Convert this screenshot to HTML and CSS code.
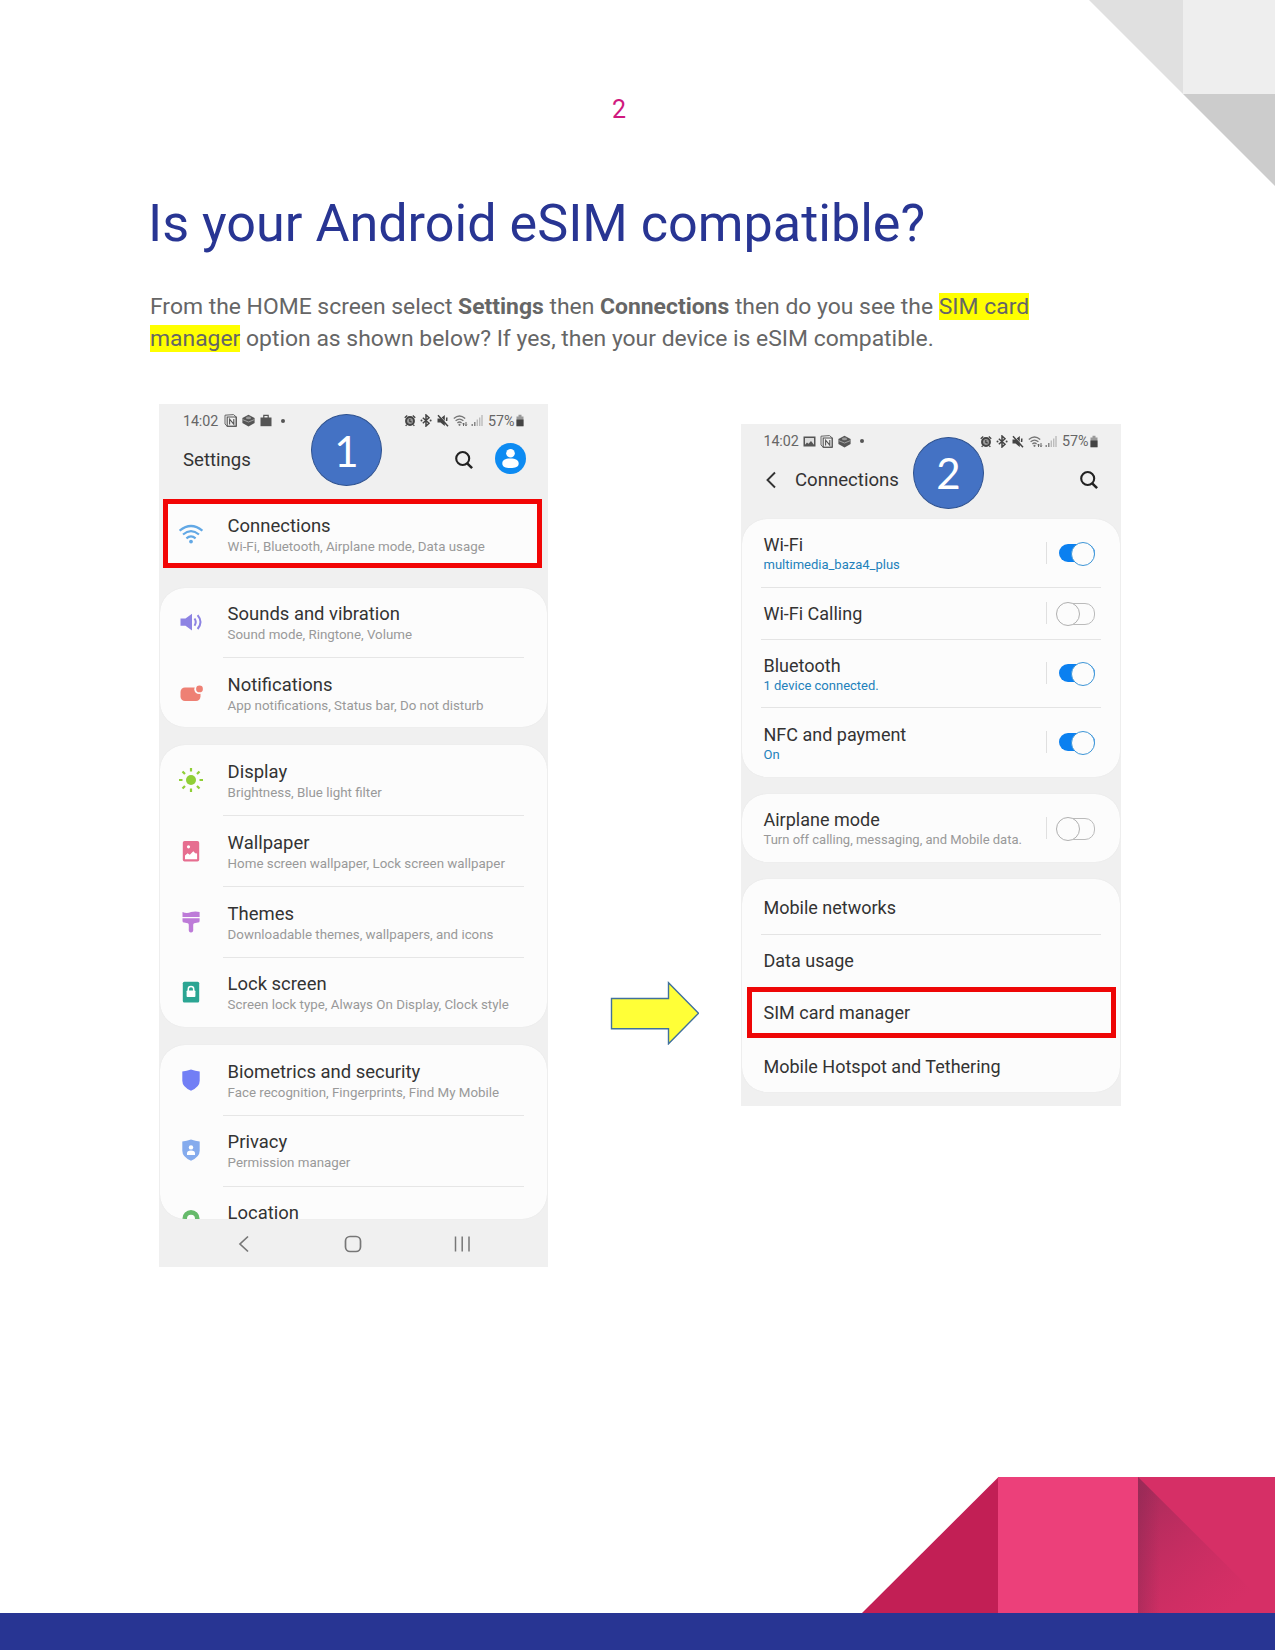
FILE: index.html
```html
<!DOCTYPE html>
<html lang="en">
<head>
<meta charset="utf-8">
<title>Is your Android eSIM compatible?</title>
<link rel="stylesheet" href="styles.css">
</head>
<body>
<svg width="0" height="0" class="defs" aria-hidden="true">
  <symbol id="i-note" viewBox="0 0 13 13"><path d="M1 1.2 9.5.6 12.3 3v9.3H3.2L1 10z" fill="none" stroke="#666" stroke-width="1"/><path d="M3.2 3h9v9.2h-9zM5.6 10.5V5.200l4.200 5V5" fill="none" stroke="#555" stroke-width="1.1"/></symbol>
  <symbol id="i-cube" viewBox="0 0 13 13"><path d="M6.500.8 12.600 4v5L6.500 12.400.4 9V4z" fill="#555"/><path d="M.6 5.600 6.500 8l5.900-2.400" fill="none" stroke="#aaa" stroke-width=".9"/><ellipse cx="6.500" cy="3.900" rx="2.600" ry="1.300" fill="#999"/></symbol>
  <symbol id="i-bag" viewBox="0 0 12 13"><path d="M.5 3.500h11v8.700H.5z" fill="#555"/><path d="M3.800 4V1.300h4.400V4" fill="none" stroke="#555" stroke-width="1.200"/></symbol>
  <symbol id="i-pic" viewBox="0 0 13 13"><path d="M.5 1.500h12v10H.5z" fill="#555"/><path d="M2 9.800V3h9v6.800L8 6 5.500 8.800 4 7.600z" fill="#ddd"/></symbol>
  <symbol id="i-alarm" viewBox="0 0 13 13"><circle cx="6.500" cy="7" r="4.300" fill="#999" stroke="#444" stroke-width="2.100"/><path d="M.8 3.500 3.500 1M12.200 3.500 9.500 1M3 11l-1.200 1.300M10 11l1.200 1.300M6.300 4.800v2.600l2 .8" fill="none" stroke="#444" stroke-width="1.400"/></symbol>
  <symbol id="i-bt" viewBox="0 0 12 13"><path d="M2.800 3.800 9 9.200 6 12V1l3 2.800-6.200 5.400" fill="none" stroke="#444" stroke-width="1.500"/><circle cx="1.500" cy="6.500" r="1" fill="#444"/><circle cx="10.600" cy="6.500" r="1" fill="#444"/></symbol>
  <symbol id="i-mute" viewBox="0 0 12 13"><path d="M.5 4.500h3L7.800 1v11L3.500 8.600h-3z" fill="#444"/><path d="M2 1.200 11 10.800" stroke="#f1f1f1" stroke-width="1"/><path d="M1 1.300 11 12.200M9.800 3.500l-.2 3.500" stroke="#444" stroke-width="1.500"/></symbol>
  <symbol id="i-swifi" viewBox="0 0 15 13"><path d="M.8 4.600Q6.500-.6 12.200 4.600M2.600 6.800q3.900-3.400 7.800 0M4.400 8.900q2.100-1.800 4.200 0" fill="none" stroke="#777" stroke-width="1.300"/><circle cx="6.500" cy="10.800" r="1.100" fill="#777"/><path d="M10.500 12V9M13 8v3.500M9.600 10.200l.9-1.200.9 1.200M12.100 10.600l.9 1.200.9-1.200" fill="none" stroke="#666" stroke-width="1"/></symbol>
  <symbol id="i-signal" viewBox="0 0 12 13"><path d="M1.200 12v-2M3.800 12V8" stroke="#777" stroke-width="1.300"/><path d="M6.300 12V5.500M8.700 12V3.500M11 12V1" stroke="#bbb" stroke-width="1.400"/></symbol>
  <symbol id="i-batt" viewBox="0 0 8 13"><path d="M2.500.8h3v1.600h2v9.800h-7V2.400h2z" fill="#999"/><path d="M.5 5.500h7v6.700h-7z" fill="#444"/></symbol>
  <symbol id="i-search" viewBox="0 0 20 20"><circle cx="8.700" cy="8.500" r="6.500" fill="none" stroke="#222" stroke-width="2.100"/><path d="m13.200 13.300 4.900 4.900" stroke="#222" stroke-width="2.500"/></symbol>
</svg>

<main class="page">
  <svg class="corner" width="187" height="187" viewBox="0 0 187 187" aria-hidden="true">
    <path d="M1 0h94v94z" fill="#e0e0e0"/><path d="M95 0h92v94H95z" fill="#eee"/><path d="M95 94h92v92z" fill="#ccc"/>
  </svg>

  <div class="page-number">2</div>
  <h1>Is your Android eSIM compatible?</h1>
  <p class="lead">From the HOME screen select <b>Settings</b> then <b>Connections</b> then do you see the <mark>SIM card<br>manager</mark> option as shown below? If yes, then your device is eSIM compatible.</p>

  <div class="steps">
    <section class="phone settings">
      <div class="badge">1</div>
      <div class="status">
        <span class="clock">14:02</span>
        <svg class="s13"><use href="#i-note"/></svg><svg class="s13"><use href="#i-cube"/></svg><svg class="s12"><use href="#i-bag"/></svg><i class="dot"></i>
        <span class="push"></span>
        <svg class="s12"><use href="#i-alarm"/></svg><svg class="s12"><use href="#i-bt"/></svg><svg class="s12"><use href="#i-mute"/></svg><svg class="s15"><use href="#i-swifi"/></svg><svg class="s12"><use href="#i-signal"/></svg>
        <span class="pct">57%</span><svg class="s8"><use href="#i-batt"/></svg>
      </div>
      <header class="bar">
        <h2>Settings</h2>
        <svg class="search"><use href="#i-search"/></svg>
        <svg class="avatar" viewBox="0 0 31 31"><circle cx="15.500" cy="15.500" r="15.500" fill="#0d8bf2"/><circle cx="15.500" cy="10.300" r="4.300" fill="#fff"/><path d="M7.300 20.500c0-3.500 3-5 8.200-5s8.200 1.500 8.200 5-3.500 4.500-8.200 4.500-8.200-1-8.200-4.500z" fill="#fff"/></svg>
      </header>

      <div class="row picked">
        <svg class="icon" viewBox="0 0 24 24"><g fill="none" stroke="#62a8e5" stroke-width="2.200"><path d="M.6 8.700q11.400-9.400 22.800 0"/><path d="M4 12.500q8-6.600 16 0"/><path d="M7.400 16.300q4.600-3.800 9.200 0"/></g><circle cx="12" cy="19.600" r="1.900" fill="#62a8e5"/></svg>
        <div class="text"><h3>Connections</h3><p>Wi-Fi, Bluetooth, Airplane mode, Data usage</p></div>
      </div>

      <div class="card">
        <div class="row">
          <svg class="icon" viewBox="0 0 24 24"><path d="M1.500 8.500h5L13 3.800v16.600l-6.500-4.700h-5z" fill="#8d83e3"/><path d="M15.500 8.500q2.500 3.600 0 7.200M18.600 5.200q5.800 6.900 0 13.800" fill="none" stroke="#8d83e3" stroke-width="2"/></svg>
          <div class="text line"><h3>Sounds and vibration</h3><p>Sound mode, Ringtone, Volume</p></div>
        </div>
        <div class="row">
          <svg class="icon" viewBox="0 0 24 24"><rect x="1.500" y="6.500" width="20" height="13.500" rx="4.500" fill="#ee8074"/><circle cx="20.200" cy="8.200" r="4.900" fill="#fcfcfc"/><circle cx="20.500" cy="7.900" r="3.400" fill="#ee8074"/></svg>
          <div class="text"><h3>Notifications</h3><p>App notifications, Status bar, Do not disturb</p></div>
        </div>
      </div>

      <div class="card">
        <div class="row">
          <svg class="icon" viewBox="0 0 24 24"><circle cx="12" cy="12" r="5" fill="#90cf36"/><path d="M12 0v3.500M12 20.500V24M0 12h3.500M20.500 12H24M3.500 3.500 6 6M18 18l2.500 2.500M20.500 3.500 18 6M6 18l-2.500 2.500" stroke="#90cf36" stroke-width="2.200"/></svg>
          <div class="text line"><h3>Display</h3><p>Brightness, Blue light filter</p></div>
        </div>
        <div class="row">
          <svg class="icon" viewBox="0 0 24 24"><rect x="3.800" y="2" width="16.400" height="20.500" rx="1.800" fill="#e66e90"/><circle cx="9.500" cy="7.800" r="1.600" fill="#fff"/><path d="M6 20.300v-3.800l2.600-2.300 2.200 1.600 3.500-3.500 1.900 2 1.900.1v5.900z" fill="#fff"/></svg>
          <div class="text line"><h3>Wallpaper</h3><p>Home screen wallpaper, Lock screen wallpaper</p></div>
        </div>
        <div class="row">
          <svg class="icon" viewBox="0 0 24 24"><path d="M3.500 2q4.500 1.800 8.500 0 4.500-1.200 8.600 0v5H3.500zM3.500 8.300h17.100v2.600q0 1.600-1.600 1.600l-3.800.7q-1.200.3-1 2.500v2.800q.5 4-2.200 4t-2.200-4v-2.800q.2-2.200-1-2.500l-3.800-.7q-1.500 0-1.500-1.600z" fill="#bd7bd8"/></svg>
          <div class="text line"><h3>Themes</h3><p>Downloadable themes, wallpapers, and icons</p></div>
        </div>
        <div class="row">
          <svg class="icon" viewBox="0 0 24 24"><rect x="3.800" y="1.700" width="16.400" height="20.800" rx="1.500" fill="#2ba593"/><rect x="7.600" y="10.500" width="8.800" height="6.500" rx=".8" fill="#fff"/><path d="M9.300 11V9q0-2.500 2.700-2.500T14.700 9v2" fill="none" stroke="#fff" stroke-width="1.500"/></svg>
          <div class="text"><h3>Lock screen</h3><p>Screen lock type, Always On Display, Clock style</p></div>
        </div>
      </div>

      <div class="card clipped">
        <div class="row">
          <svg class="icon" viewBox="0 0 24 24"><path d="M12 1.600q4.300 1.700 8.700 1.900v9.300q0 6.300-8.700 9.900-8.700-3.600-8.700-9.900V3.500Q7.700 3.300 12 1.600z" fill="#727ff5"/></svg>
          <div class="text line"><h3>Biometrics and security</h3><p>Face recognition, Fingerprints, Find My Mobile</p></div>
        </div>
        <div class="row">
          <svg class="icon" viewBox="0 0 24 24"><path d="M12 1.600q4.300 1.700 8.700 1.900v9.300q0 6.300-8.700 9.900-8.700-3.600-8.700-9.900V3.500Q7.700 3.300 12 1.600z" fill="#85abed"/><circle cx="12" cy="9.400" r="2.200" fill="#fff"/><path d="M8 17v-1.800q0-2.800 4-2.800t4 2.800V17z" fill="#fff"/></svg>
          <div class="text line"><h3>Privacy</h3><p>Permission manager</p></div>
        </div>
        <div class="row">
          <svg class="icon" viewBox="0 0 24 24"><circle cx="12" cy="9.700" r="6.300" fill="none" stroke="#66ba6b" stroke-width="4.600"/></svg>
          <div class="text"><h3>Location</h3></div>
        </div>
      </div>

      <nav class="keys">
        <svg viewBox="0 0 18 18"><path d="M14 1.500 6 9l8 7.500" fill="none" stroke="#777" stroke-width="1.700"/></svg>
        <svg viewBox="0 0 18 18"><rect x="1.500" y="1.500" width="15" height="15" rx="4.500" fill="none" stroke="#777" stroke-width="1.700"/></svg>
        <svg viewBox="0 0 18 18"><path d="M2.500 1.500v15M9.200 1.500v15M16 1.500v15" stroke="#777" stroke-width="1.500"/></svg>
      </nav>
    </section>

    <svg class="arrow" width="89" height="64" viewBox="0 0 89 64"><path d="M1.500 17.500h57V1.800l30 30.500-30 30.500V47.800h-57z" fill="#ffff37" stroke="#41719c" stroke-width="1.400"/></svg>

    <section class="phone connections">
      <div class="badge">2</div>
      <div class="status">
        <span class="clock">14:02</span>
        <svg class="s13"><use href="#i-pic"/></svg><svg class="s13"><use href="#i-note"/></svg><svg class="s13"><use href="#i-cube"/></svg><i class="dot"></i>
        <span class="push"></span>
        <svg class="s12"><use href="#i-alarm"/></svg><svg class="s12"><use href="#i-bt"/></svg><svg class="s12"><use href="#i-mute"/></svg><svg class="s15"><use href="#i-swifi"/></svg><svg class="s12"><use href="#i-signal"/></svg>
        <span class="pct">57%</span><svg class="s8"><use href="#i-batt"/></svg>
      </div>
      <header class="bar">
        <svg class="back" viewBox="0 0 12 18"><path d="M10 1.500 2.500 9l7.500 7.500" fill="none" stroke="#333" stroke-width="1.900"/></svg>
        <h2>Connections</h2>
        <svg class="search"><use href="#i-search"/></svg>
      </header>

      <div class="card">
        <div class="item tall line"><div class="text"><h3>Wi-Fi</h3><p class="blue">multimedia_baza4_plus</p></div><span class="switch on"></span></div>
        <div class="item line"><h3>Wi-Fi Calling</h3><span class="switch"></span></div>
        <div class="item tall line"><div class="text"><h3>Bluetooth</h3><p class="blue">1 device connected.</p></div><span class="switch on"></span></div>
        <div class="item tall"><div class="text"><h3>NFC and payment</h3><p class="blue">On</p></div><span class="switch on"></span></div>
      </div>
      <div class="card">
        <div class="item tall airplane"><div class="text"><h3>Airplane mode</h3><p>Turn off calling, messaging, and Mobile data.</p></div><span class="switch"></span></div>
      </div>
      <div class="card">
        <div class="item networks line"><h3>Mobile networks</h3></div>
        <div class="item"><h3>Data usage</h3></div>
        <div class="item picked"><h3>SIM card manager</h3></div>
        <div class="item hotspot"><h3>Mobile Hotspot and Tethering</h3></div>
      </div>
    </section>
  </div>

  <footer class="footer">
    <svg class="fold" width="414" height="137" viewBox="0 0 414 137" aria-hidden="true">
      <defs>
        <linearGradient id="diag" gradientUnits="userSpaceOnUse" x1="277" y1="20" x2="372" y2="132"><stop offset="0" stop-color="#7d2850" stop-opacity=".5"/><stop offset=".5" stop-color="#982855" stop-opacity=".25"/><stop offset="1" stop-color="#b02858" stop-opacity="0"/></linearGradient>
        <linearGradient id="edge" gradientUnits="userSpaceOnUse" x1="277" y1="0" x2="299" y2="0"><stop offset="0" stop-color="#7d2850" stop-opacity=".35"/><stop offset="1" stop-color="#7d2850" stop-opacity="0"/></linearGradient>
      </defs>
      <path d="M1 137 137 1.500V137z" fill="#c21f55"/>
      <path d="M277 1h137v136H277z" fill="#d62f66"/>
      <path d="M277 1v136h137z" fill="url(#diag)"/>
      <path d="M277 1v136h137z" fill="url(#edge)"/>
      <path d="M137 1h140v136H137z" fill="#ec407a"/>
    </svg>
    <div class="band"></div>
  </footer>
</main>
</body>
</html>
```
FILE: styles.css
```css
* { box-sizing: border-box; }
body { margin: 0; background: #fff; font-family: Roboto, "Liberation Sans", sans-serif; }
h1, h2, h3, p { margin: 0; font-weight: 400; }
svg { display: block; flex: none; }
.defs { position: absolute; }

.page {
  position: relative;
  display: flex;
  flex-direction: column;
  width: 1275px;
  height: 1650px;
  padding: 95px 0 0 150px;
  overflow: hidden;
}
.corner { position: absolute; top: 0; right: 0; width: 187px; }
.page-number { width: 938px; text-align: center; font-size: 25px; line-height: 30px; color: #d0197e; }
h1 { margin: 68px 0 0 -2px; font-size: 52.150px; line-height: 61px; color: #283593; white-space: nowrap; }
.lead { margin-top: 37px; font-size: 22.9px; line-height: 32px; color: #666; white-space: nowrap; }
mark { background: #ff0; color: inherit; }

.steps { display: flex; align-items: flex-start; margin: 49px 0 0 9px; }
.phone { position: relative; display: flex; flex-direction: column; flex: none; background: #f0f0f0; }
.phone > * { flex: none; }
.settings { width: 389px; height: 863px; }
.connections { width: 379.5px; height: 682px; margin: 20px 0 0 42.500px; }
.arrow { margin: 577px 0 0 61.500px; }

.badge {
  position: absolute;
  top: 10px;
  left: 152px;
  width: 71px;
  height: 72px;
  border: 1.500px solid #2f528f;
  border-radius: 50%;
  background: #4472c4;
  color: #fff;
  font: 42px/72px Lato, sans-serif;
  text-align: center;
}
.connections .badge { top: 13px; left: 172px; line-height: 71px; }

.status { display: flex; align-items: center; height: 34px; padding: 0 24px; color: #666; font-size: 14.300px; }
.settings .status { padding-bottom: 1px; }
.connections .status { padding: 0 22.500px; }
.clock { width: 40.500px; letter-spacing: -.1px; }
.pct { margin-left: 1px; width: 28px; }
.push { flex: 1; }
.s13 { width: 13px; height: 13px; margin-right: 5px; }
.s12 { width: 12px; height: 13px; margin-right: 4.500px; }
.s15 { width: 15px; height: 13px; margin-right: 2.500px; }
.s8 { width: 8px; height: 13px; }
.dot { width: 4px; height: 4px; margin-left: 5px; border-radius: 50%; background: #555; }
.connections .clock { width: 39.500px; }
.connections .s13 { margin-right: 4.300px; }
.connections .s12 { margin-right: 4.100px; }
.connections .s15 { margin-right: 2px; }

.bar { display: flex; align-items: center; height: 43px; color: #333; }
.bar h2 { flex: 1; font-size: 18.600px; line-height: 24px; }
.search { width: 20px; height: 20px; }
.settings .bar { margin-bottom: 17.500px; padding: 0 22.500px 0 24px; }
.settings .search { margin-right: 20.500px; }
.avatar { width: 31px; height: 31px; margin-top: -2px; }
.connections .bar { margin-bottom: 18px; padding: 0 22px 0 24px; }
.back { width: 12px; height: 18px; margin-right: 18px; }

.card { margin: 0 1px 18px; border-radius: 25px; background: #fcfcfc; box-shadow: 0 0 1px #ddd; }
h3 { font-size: 18.450px; line-height: 21px; color: #333; white-space: nowrap; }
.text p { font-size: 13.330px; line-height: 20px; color: #999; white-space: nowrap; }
.row { display: flex; height: 69.200px; padding-left: 19px; }
.row .icon { width: 24px; height: 24px; margin: 22.500px 20px 0 0; }
.row .text { width: 300.500px; padding: 16.500px 0 0 4.600px; }
.row .text.line { border-bottom: 1.500px solid #e6e6e6; }
.card .row:not(:last-child) { height: 70.800px; }
.row.picked {
  height: 69px;
  margin: 0 6px 20px 4px;
  padding-left: 11px;
  border: 5px solid #f20505;
  background: #fcfcfc;
}
.picked .icon { margin-top: 18px; }
.picked .text { padding-top: 12.500px; }
.clipped { height: 173.500px; margin-bottom: 0; overflow: hidden; }
.keys { display: flex; justify-content: space-between; height: 49px; padding: 16px 77px 0 75px; }
.keys svg { width: 18px; height: 18px; }

.connections h3 { font-size: 18px; }
.connections .text p { font-size: 13px; line-height: 20.500px; }
.connections .text .blue { color: #2381bb; }
.connections .card { margin-bottom: 17px; }
.item { display: flex; align-items: center; justify-content: space-between; height: 52px; margin: 0 19px; padding: 0 6px 0 2.500px; }
.item.tall { height: 68.500px; }
.item.line { border-bottom: 1.500px solid #e4e4e4; }
.item.tall .text { padding-top: 4px; }
.item.networks { height: 55.500px; padding-top: 2px; }
.item.picked { height: 51px; margin: 0 4px 0 5px; padding-left: 11.500px; border: 5px solid #ee0606; }
.item.hotspot { height: 54px; padding-top: 3px; }

.switch { position: relative; width: 49px; height: 22px; border-left: 1.500px solid #e0e0e0; }
.switch::before {
  content: "";
  position: absolute;
  top: 1px;
  right: 0;
  width: 36px;
  height: 20px;
  border: 1.500px solid #bbb;
  border-radius: 10px;
}
.switch::after {
  content: "";
  position: absolute;
  top: 0;
  right: 15px;
  width: 22px;
  height: 22px;
  border: 1.500px solid #b0b0b0;
  border-radius: 50%;
  background: #fcfcfc;
}
.switch.on::before { top: 2px; height: 18px; border: 0; background: #0b80f0; }
.switch.on::after { right: 0; border-color: #3d95d6; }

.footer { position: absolute; inset: auto 0 0; display: flex; flex-direction: column; align-items: flex-end; }
.band { width: 100%; height: 37px; background: #283593; }
```
